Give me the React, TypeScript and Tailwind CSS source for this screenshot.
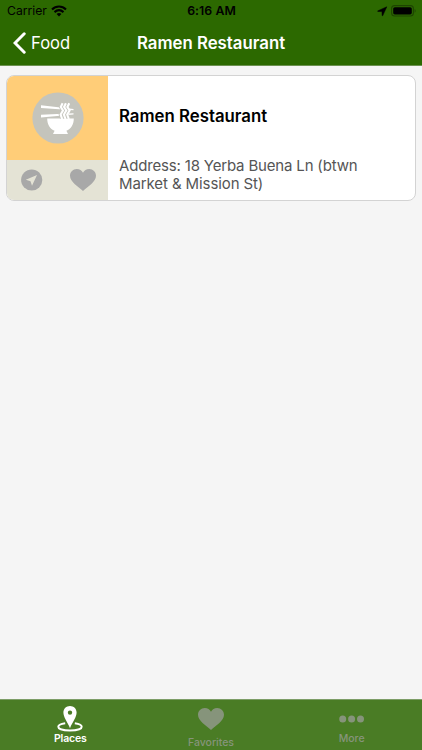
import type { ReactNode } from "react";

const HEART =
  "M13 22.5C8 18 0 13.2 0 7C0 3 3 0 6.8 0C9.6 0 11.9 1.4 13 3.8C14.1 1.4 16.4 0 19.2 0C23 0 26 3 26 7C26 13.2 18 18 13 22.5Z";

function StatusBar() {
  return (
    <div className="flex h-[22px] items-center justify-between pl-[7px] pr-1.5 text-black">
      <div className="flex w-[100px] items-center gap-1">
        <span className="pt-px text-[12.2px] leading-none">Carrier</span>
        <svg width="16" height="12" viewBox="0 0 16 12" fill="none" stroke="currentColor" strokeWidth="2.1" aria-hidden="true">
          <path d="M1 4.4C5 .5 11 .5 15 4.4" />
          <path d="M3.5 7.1C6.2 4.7 9.8 4.7 12.5 7.1" />
          <path d="M5.6 8.9C7 7.6 9 7.6 10.4 8.9L8 11.4Z" fill="currentColor" stroke="none" />
        </svg>
      </div>
      <span className="pt-px text-[12.3px] font-semibold leading-none tracking-[0.05px]">6:16 AM</span>
      <div className="flex w-[100px] items-center justify-end gap-[3px]">
        <svg width="11" height="11" viewBox="0 0 11 11" fill="currentColor" aria-hidden="true">
          <path d="M9.8.8L.6 4.9L.9 5.5L5 5.6L5.1 9.6L5.7 9.8Z" stroke="currentColor" strokeWidth=".5" />
        </svg>
        <svg width="25" height="12" viewBox="0 0 25 12" aria-hidden="true">
          <rect x=".6" y=".6" width="21.8" height="10.4" rx="3" fill="none" stroke="#1e4500" strokeWidth="1.1" />
          <rect x="2.2" y="2.2" width="18.6" height="7.2" rx="1.6" fill="#000" />
          <path d="M23.6 4V7.8C25 7 25 4.8 23.6 4Z" fill="#1e4500" />
        </svg>
      </div>
    </div>
  );
}

function NavBar() {
  return (
    <div className="grid h-[43px] grid-cols-[1fr_auto_1fr] items-center text-white">
      <button type="button" className="flex items-center gap-1 pl-[13px] text-[16.6px]">
        <svg width="14" height="22" viewBox="0 0 14 22" fill="none" stroke="currentColor" strokeWidth="3" strokeLinecap="round" aria-hidden="true">
          <path d="M11.2 1.8L2 11L11.2 20.2" />
        </svg>
        Food
      </button>
      <h1 className="text-[16.8px] font-semibold">Ramen Restaurant</h1>
    </div>
  );
}

function RamenIcon() {
  return (
    <svg width="52" height="52" viewBox="0 0 52 52" aria-hidden="true">
      <circle cx="26" cy="26" r="25.6" fill="#c4c4bc" />
      <g fill="#fff">
        <path d="M9 13.3L41.5 16.9V18.2L9 15.9Z" />
        <path d="M9 22.8L41.5 21.3V22.6L9 25.4Z" />
        <path d="M15.2 26.6H41.8C41.8 32.5 39 37.3 34.4 38.8L36 42H21L22.6 38.8C18 37.3 15.2 32.5 15.2 26.6Z" />
      </g>
      {/* gap between the chopsticks and the noodles */}
      <path d="M28.6 11.5L26.8 15L28.8 18.5L26.6 22.5L28 26.6H37.2L36.4 22.5L38.4 18.5L36.4 15L38.2 11.5Z" fill="#c4c4bc" />
      <g fill="none" stroke="#fff" strokeWidth="2.1">
        <path d="M30.6 11.3L28.8 15L31 18.5L28.6 22.5L30.2 27" />
        <path d="M33.9 11.3L32.1 15L34.3 18.5L31.9 22.5L33.5 27" />
        <path d="M37.2 11.3L35.4 15L37.6 18.5L35.2 22.5L36.8 27" />
      </g>
    </svg>
  );
}

function PlaceCard() {
  return (
    <article className="mx-1.5 mt-[9px] flex h-[126px] overflow-hidden rounded-lg border border-[#d3d3d3] bg-white">
      <div className="flex w-[101px] shrink-0 flex-col">
        <div className="flex h-[84px] items-center justify-center bg-[#ffcd78]">
          <RamenIcon />
        </div>
        <div className="flex flex-1 items-center justify-between bg-[#e4e3d5] pl-3.5 pr-3">
          <svg width="22" height="22" viewBox="0 0 22 22" aria-hidden="true">
            <circle cx="10.7" cy="11" r="10.6" fill="#a8a8a8" />
            <path d="M16 6L4.8 10.8L9.5 12.2L11 16.8Z" fill="#e4e3d5" />
          </svg>
          <svg width="26" height="22" viewBox="0 0 26 22.5" preserveAspectRatio="none" fill="#a8a8a8" aria-hidden="true">
            <path d={HEART} />
          </svg>
        </div>
      </div>
      <div className="flex flex-1 flex-col justify-between pb-[7px] pl-[11px] pt-[29px]">
        <h2 className="text-[16.8px] font-semibold leading-[22px] text-black">Ramen Restaurant</h2>
        <p className="w-[260px] text-[15px] leading-[18px] text-[#555]">
          <span className="tracking-[-0.17px]">Address: 18 Yerba Buena Ln (btwn</span>
          <br />
          <span className="tracking-[-0.1px]">Market &amp; Mission St)</span>
        </p>
      </div>
    </article>
  );
}

interface TabProps {
  label: string;
  className: string;
  labelClassName?: string;
  children: ReactNode;
}

function Tab({ label, className, labelClassName = "", children }: TabProps) {
  return (
    <button type="button" className={`flex flex-col items-center ${className}`}>
      <span className="flex h-[26px] items-center">{children}</span>
      <span className={`text-[10.5px] leading-3 ${labelClassName}`}>{label}</span>
    </button>
  );
}

function TabBar() {
  return (
    <nav className="grid h-[51px] grid-cols-3 border-t border-[#7d9d67] bg-[#4a7c25]">
      <Tab label="Places" className="pt-1.5 text-white" labelClassName="mt-px font-semibold tracking-[-0.15px]">
        <svg width="26" height="26" viewBox="0 0 26 26" aria-hidden="true">
          <path
            d="M8.2 17.2C4 17.8 1.3 19 1.3 20.8C1.3 23 6.2 24.6 13 24.6S24.7 23 24.7 20.8C24.7 19 22 17.8 17.8 17.2"
            fill="none"
            stroke="currentColor"
            strokeWidth="2"
          />
          <path
            d="M13 0C9.3 0 6.4 2.8 6.4 6.6C6.4 11.4 10.4 16 13 22.2C15.6 16 19.6 11.4 19.6 6.6C19.6 2.8 16.7 0 13 0ZM13 4.4A2.2 2.2 0 1 1 13 8.8A2.2 2.2 0 1 1 13 4.4Z"
            fill="currentColor"
            fillRule="evenodd"
          />
        </svg>
      </Tab>
      <Tab label="Favorites" className="pt-1.5 text-[#86947b]" labelClassName="mt-[5px] font-medium">
        <svg width="26" height="22" viewBox="0 0 26 22.5" preserveAspectRatio="none" fill="currentColor" aria-hidden="true">
          <path d={HEART} />
        </svg>
      </Tab>
      <Tab label="More" className="pt-1.5 text-[#86947b]" labelClassName="mt-px font-medium">
        <svg width="26" height="8" viewBox="0 0 26 8" fill="currentColor" aria-hidden="true">
          <circle cx="3.7" cy="4" r="3.5" />
          <circle cx="12.6" cy="4" r="3.5" />
          <circle cx="21.5" cy="4" r="3.5" />
        </svg>
      </Tab>
    </nav>
  );
}

export default function App() {
  return (
    <div className="flex h-[750px] w-[422px] flex-col overflow-hidden bg-[#f5f5f5] font-['Inter','Liberation_Sans',sans-serif]">
      <header className="h-[66px] border-b border-[#6c9150] bg-[#2c6900]">
        <StatusBar />
        <NavBar />
      </header>
      <main className="flex-1">
        <PlaceCard />
      </main>
      <TabBar />
    </div>
  );
}
